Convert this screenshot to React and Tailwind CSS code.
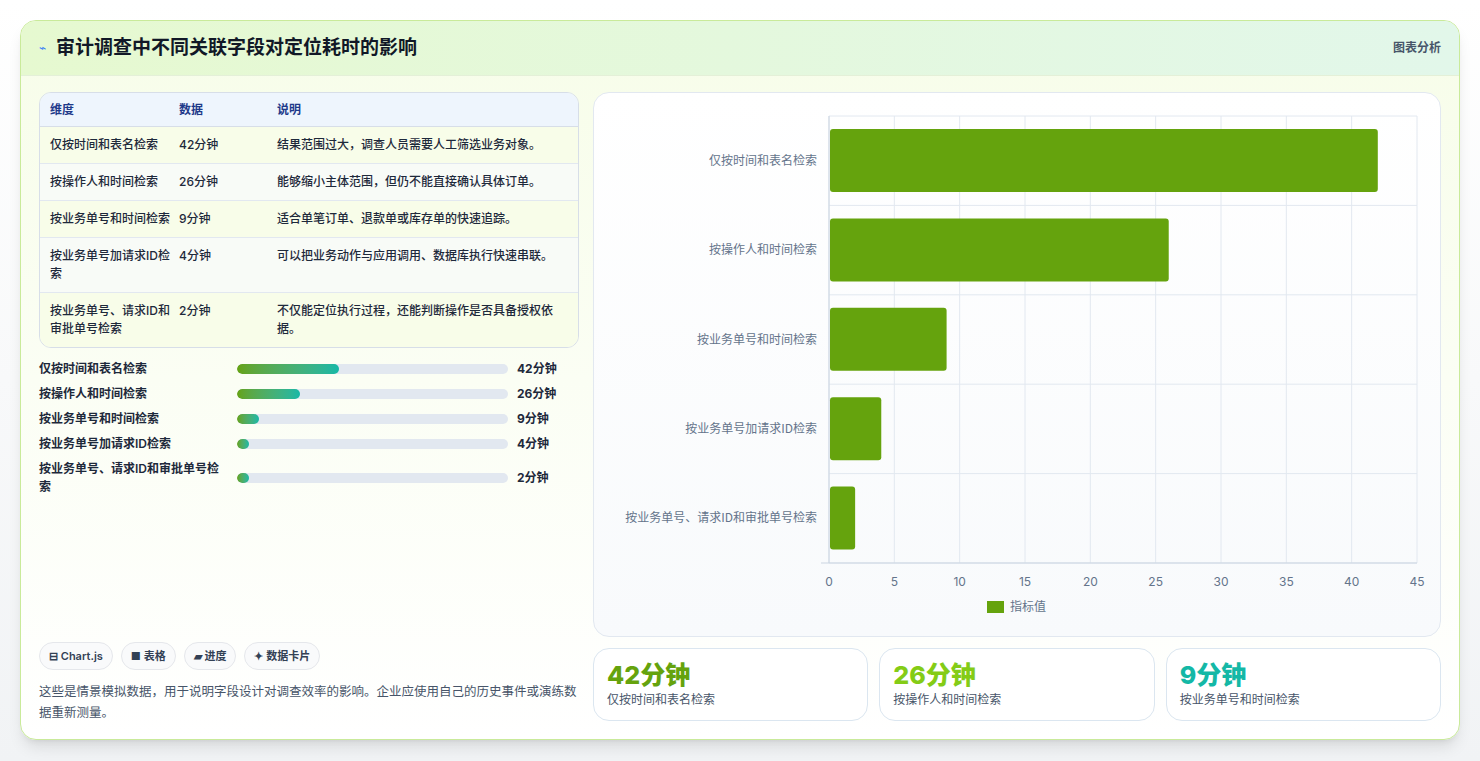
import React from "react";

const rows = [
  ["仅按时间和表名检索", "42分钟", "结果范围过大，调查人员需要人工筛选业务对象。", 42],
  ["按操作人和时间检索", "26分钟", "能够缩小主体范围，但仍不能直接确认具体订单。", 26],
  ["按业务单号和时间检索", "9分钟", "适合单笔订单、退款单或库存单的快速追踪。", 9],
  ["按业务单号加请求ID检索", "4分钟", "可以把业务动作与应用调用、数据库执行快速串联。", 4],
  ["按业务单号、请求ID和审批单号检索", "2分钟", "不仅能定位执行过程，还能判断操作是否具备授权依据。", 2],
];

function Chart() {
  const x0 = 235, w = 588, y0 = 23, h = 447, rh = h / 5;
  const sx = (v) => x0 + (v / 45) * w;
  return (
    <svg width="846" height="544" className="block">
      {[0,5,10,15,20,25,30,35,40,45].map((t) => (
        <g key={t}>
          <line x1={sx(t)} x2={sx(t)} y1={y0} y2={y0 + h} stroke="#e2e8f0" />
          <text x={sx(t)} y={y0 + h + 23} textAnchor="middle" fontSize="12" fill="#64748b" fontFamily="Inter, sans-serif">{t}</text>
        </g>
      ))}
      {[0,1,2,3,4,5].map((i) => (
        <line key={i} x1={x0} x2={x0 + w} y1={y0 + i * rh} y2={y0 + i * rh} stroke="#e2e8f0" />
      ))}
      <line x1={x0 - 8} x2={x0 + w} y1={y0 + h} y2={y0 + h} stroke="#cbd5e1" />
      <line x1={x0} x2={x0} y1={y0} y2={y0 + h} stroke="#cbd5e1" />
      {rows.map((r, i) => (
        <g key={i}>
          <rect x={x0 + 1} y={y0 + i * rh + 13} width={sx(r[3]) - x0 - 1} height={63} rx="3" fill="#65a30d" />
          <text x={x0 - 12} y={y0 + i * rh + rh / 2 + 4} textAnchor="end" fontSize="12" fill="#64748b" fontFamily="'Noto Sans CJK SC', sans-serif">{r[0]}</text>
        </g>
      ))}
      <rect x="393" y="508" width="17" height="12" fill="#65a30d" />
      <text x="416" y="518" fontSize="12" fill="#64748b" fontFamily="'Noto Sans CJK SC', sans-serif">指标值</text>
    </svg>
  );
}

export default function App() {
  return (
    <div className="min-h-[761px] bg-gradient-to-b from-white to-[#f1f3f5] pt-5 px-5 pb-5" style={{ fontFamily: "Inter, 'Noto Sans CJK SC', sans-serif" }}>
      <div className="rounded-2xl border border-[#c9ea9a] bg-gradient-to-b from-[#f7fde9] to-white shadow-lg overflow-hidden h-[720px] flex flex-col">
        <div className="h-[55px] flex items-center justify-between px-[18px] bg-gradient-to-r from-[#e6f9d0] to-[#e2f7ea] border-b border-[#e4f0d8]">
          <div className="flex items-center gap-2.5">
            <span className="text-[#3b82f6] text-xs">⌁</span>
            <span className="text-[19px] font-bold text-[#111827]">审计调查中不同关联字段对定位耗时的影响</span>
          </div>
          <span className="text-xs font-semibold text-[#475569]">图表分析</span>
        </div>
        <div className="flex gap-[14px] px-[18px] pt-[16px] flex-1">
          <div className="w-[542px] flex flex-col">
            <div className="rounded-xl border border-[#d7dee8] overflow-hidden text-xs text-[#1e293b]">
              <div className="flex h-[34px] items-center bg-[#eef5fd] border-b border-[#d7dee8] text-[#1e3a8a] font-semibold">
                <div className="w-[139px] pl-[10px]">维度</div><div className="w-[98px]">数据</div><div className="flex-1">说明</div>
              </div>
              {rows.map((r, i) => (
                <div key={i} className={`flex py-[9px] leading-[18px] font-medium ${i % 2 ? "bg-[#f8fbf7]" : "bg-[#f8fde9]"} ${i < 4 ? "border-b border-[#e2e8f0]" : ""}`}>
                  <div className="w-[139px] pl-[10px] pr-2">{r[0]}</div><div className="w-[98px]">{r[1]}</div><div className="flex-1 pr-5">{r[2]}</div>
                </div>
              ))}
            </div>
            <div className="mt-[12px] flex flex-col gap-[7px] text-xs font-semibold text-[#1e293b]">
              {rows.map((r, i) => (
                <div key={i} className="flex items-center">
                  <div className="w-[198px] leading-[18px] pr-2">{r[0]}</div>
                  <div className="w-[271px] h-[10px] rounded-full bg-[#e2e8f0] overflow-hidden">
                    <div className="h-full rounded-full bg-gradient-to-r from-[#65a30d] to-[#14b8a6]" style={{ width: `${Math.max((r[3] / 112) * 100, 4.5)}%` }} />
                  </div>
                  <div className="pl-[9px] font-bold">{r[1]}</div>
                </div>
              ))}
            </div>
            <div className="flex-1" />
            <div className="flex gap-2 text-[11px] font-semibold text-[#334155]">
              {["⊟ Chart.js", "■ 表格", "▰ 进度", "✦ 数据卡片"].map((c) => (
                <span key={c} className="h-[28px] px-[9px] flex items-center rounded-full border border-[#e5e7eb] bg-[#f9fafb]">{c}</span>
              ))}
            </div>
            <p className="mt-[11px] text-[12.5px] leading-[21px] text-[#475569] mb-[16px]">这些是情景模拟数据，用于说明字段设计对调查效率的影响。企业应使用自己的历史事件或演练数据重新测量。</p>
          </div>
          <div className="flex-1 flex flex-col gap-[11px]">
            <div className="h-[545px] rounded-2xl border border-[#e2e8f0] bg-gradient-to-b from-white to-[#f8fafc] overflow-hidden">
              <Chart />
            </div>
            <div className="grid grid-cols-3 gap-[11px]">
              {[["42分钟", rows[0][0], "text-[#65a30d]"], ["26分钟", rows[1][0], "text-[#84cc16]"], ["9分钟", rows[2][0], "text-[#14b8a6]"]].map(([v, l, c]) => (
                <div key={v} className="h-[73px] rounded-2xl border border-[#dbe6f0] bg-white px-[13px] pt-[10px]">
                  <div className={`text-[25px] font-extrabold leading-[32px] ${c}`}>{v}</div>
                  <div className="text-xs text-[#475569] mt-[1px]">{l}</div>
                </div>
              ))}
            </div>
          </div>
        </div>
      </div>
    </div>
  );
}
